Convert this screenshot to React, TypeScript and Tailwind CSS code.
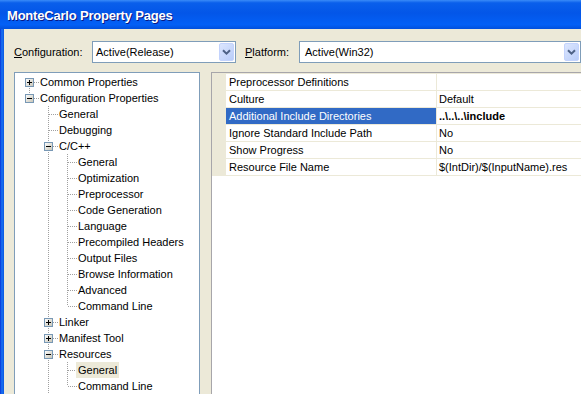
import React from "react";

const DOT = "#A0A0A0";

type TreeRow = {
  label: string;
  level: number;
  guides: boolean[];
  kind: "plus" | "minus" | "leaf";
  first?: boolean;
  last?: boolean;
  selected?: boolean;
};

const c2 = [false, true];

const treeRows: TreeRow[] = [
  { label: "Common Properties", level: 0, guides: [], kind: "plus", first: true },
  { label: "Configuration Properties", level: 0, guides: [], kind: "minus", last: true },
  { label: "General", level: 1, guides: [false], kind: "leaf" },
  { label: "Debugging", level: 1, guides: [false], kind: "leaf" },
  { label: "C/C++", level: 1, guides: [false], kind: "minus" },
  { label: "General", level: 2, guides: c2, kind: "leaf" },
  { label: "Optimization", level: 2, guides: c2, kind: "leaf" },
  { label: "Preprocessor", level: 2, guides: c2, kind: "leaf" },
  { label: "Code Generation", level: 2, guides: c2, kind: "leaf" },
  { label: "Language", level: 2, guides: c2, kind: "leaf" },
  { label: "Precompiled Headers", level: 2, guides: c2, kind: "leaf" },
  { label: "Output Files", level: 2, guides: c2, kind: "leaf" },
  { label: "Browse Information", level: 2, guides: c2, kind: "leaf" },
  { label: "Advanced", level: 2, guides: c2, kind: "leaf" },
  { label: "Command Line", level: 2, guides: c2, kind: "leaf", last: true },
  { label: "Linker", level: 1, guides: [false], kind: "plus" },
  { label: "Manifest Tool", level: 1, guides: [false], kind: "plus" },
  { label: "Resources", level: 1, guides: [false], kind: "minus" },
  { label: "General", level: 2, guides: c2, kind: "leaf", selected: true },
  { label: "Command Line", level: 2, guides: c2, kind: "leaf", last: true },
];

const props: [string, string][] = [
  ["Preprocessor Definitions", ""],
  ["Culture", "Default"],
  ["Additional Include Directories", "..\\..\\..\\include"],
  ["Ignore Standard Include Path", "No"],
  ["Show Progress", "No"],
  ["Resource File Name", "$(IntDir)/$(InputName).res"],
];

function Guide({ on }: { on: boolean }) {
  return (
    <svg width={19} height={16} className="shrink-0" shapeRendering="crispEdges">
      {on && <line x1={9.5} y1={0} x2={9.5} y2={16} stroke={DOT} strokeDasharray="1 1" />}
    </svg>
  );
}

function Connector({ row }: { row: TreeRow }) {
  return (
    <svg width={19} height={16} className="shrink-0" shapeRendering="crispEdges">
      <defs>
        <linearGradient id="exp" x1="0" y1="0" x2="1" y2="1">
          <stop offset="0" stopColor="#FFFFFF" />
          <stop offset="1" stopColor="#C6C3B4" />
        </linearGradient>
      </defs>
      {!row.first && <line x1={9.5} y1={0} x2={9.5} y2={8} stroke={DOT} strokeDasharray="1 1" />}
      {!row.last && <line x1={9.5} y1={8} x2={9.5} y2={16} stroke={DOT} strokeDasharray="1 1" />}
      <line x1={10} y1={8.5} x2={19} y2={8.5} stroke={DOT} strokeDasharray="1 1" />
      {row.kind !== "leaf" && (
        <g>
          <rect x={5.5} y={4.5} width={8} height={8} fill="url(#exp)" stroke="#7898B5" />
          <line x1={7} y1={8.5} x2={12} y2={8.5} stroke="#000" />
          {row.kind === "plus" && <line x1={9.5} y1={6} x2={9.5} y2={11} stroke="#000" />}
        </g>
      )}
    </svg>
  );
}

function ComboArrow() {
  return (
    <div className="m-px w-[15px] shrink-0 rounded-[2px] border border-[#C3D3FD] bg-[linear-gradient(135deg,#DCE6FE,#B9CDF9)] flex items-center justify-center">
      <svg width={9} height={6} viewBox="0 0 9 6">
        <path d="M1 1.2 L4.5 4.6 L8 1.2" fill="none" stroke="#4D6185" strokeWidth={2} />
      </svg>
    </div>
  );
}

export default function App() {
  return (
    <div className="w-[581px] h-[394px] overflow-hidden flex flex-col bg-[#ECE9D8] font-['Liberation_Sans',Arial,sans-serif] text-[11px] text-black">
      {/* Title bar */}
      <div className="h-[29px] shrink-0 flex items-center pl-[7px] pt-[2px] bg-[linear-gradient(to_bottom,#3A8BF8_0%,#0A5FEB_10%,#0356E8_45%,#0360F6_85%,#0250DC_100%)]">
        <span className="text-[13px] font-bold text-white tracking-[-0.2px] [text-shadow:1px_1px_0_#0A1883]">
          MonteCarlo Property Pages
        </span>
      </div>

      <div className="flex flex-1 min-h-0">
        {/* left frame */}
        <div className="w-[4px] shrink-0 bg-[linear-gradient(to_right,#0831D9,#166AEE_40%,#166AEE_70%,#0855DD)]" />

        <div className="flex-1 flex flex-col pl-[10px] pt-[12px]">
          {/* Config / platform row */}
          <div className="flex items-center h-[22px]">
            <span className="w-[78px] shrink-0">
              <span className="underline">C</span>onfiguration:
            </span>
            <div className="w-[144px] h-[22px] flex border border-[#7F9DB9] bg-white">
              <span className="flex-1 pl-[3px] leading-[20px]">Active(Release)</span>
              <ComboArrow />
            </div>
            <span className="ml-[9px] w-[54px] shrink-0">
              <span className="underline">P</span>latform:
            </span>
            <div className="w-[282px] h-[22px] flex border border-[#7F9DB9] bg-white">
              <span className="flex-1 pl-[5px] leading-[20px]">Active(Win32)</span>
              <ComboArrow />
            </div>
          </div>

          <div className="flex mt-[9px]">
            {/* Tree */}
            <div className="w-[186px] h-[340px] shrink-0 border border-[#7F9DB9] bg-white pt-px pl-[5px]">
              {treeRows.map((row, i) => (
                <div key={i} className="flex h-4 items-center">
                  {row.guides.map((g, j) => (
                    <Guide key={j} on={g} />
                  ))}
                  <Connector row={row} />
                  <span
                    className={
                      row.selected
                        ? "-ml-px px-[2px] h-4 leading-4 whitespace-nowrap bg-[#ECE9D8]"
                        : "-ml-px px-[2px] h-4 leading-4 whitespace-nowrap"
                    }
                  >
                    {row.label}
                  </span>
                </div>
              ))}
            </div>

            {/* Property grid */}
            <div className="ml-[11px] w-[420px] h-[340px] shrink-0 border border-[#A7A6AA] bg-white">
              <div className="flex flex-col gap-px py-px pl-[14px] bg-[#ECE9D8]">
                {props.map(([name, value], i) => (
                  <div key={i} className="flex h-4 leading-4">
                    <div
                      className={
                        i === 2
                          ? "w-[210px] shrink-0 pl-[3px] whitespace-nowrap bg-[#316AC5] text-white"
                          : "w-[210px] shrink-0 pl-[3px] whitespace-nowrap bg-white"
                      }
                    >
                      {name}
                    </div>
                    <div
                      className={
                        i === 2
                          ? "ml-px flex-1 pl-[2px] whitespace-nowrap bg-white font-bold"
                          : "ml-px flex-1 pl-[2px] whitespace-nowrap bg-white"
                      }
                    >
                      {value}
                    </div>
                  </div>
                ))}
              </div>
            </div>
          </div>
        </div>
      </div>
    </div>
  );
}
